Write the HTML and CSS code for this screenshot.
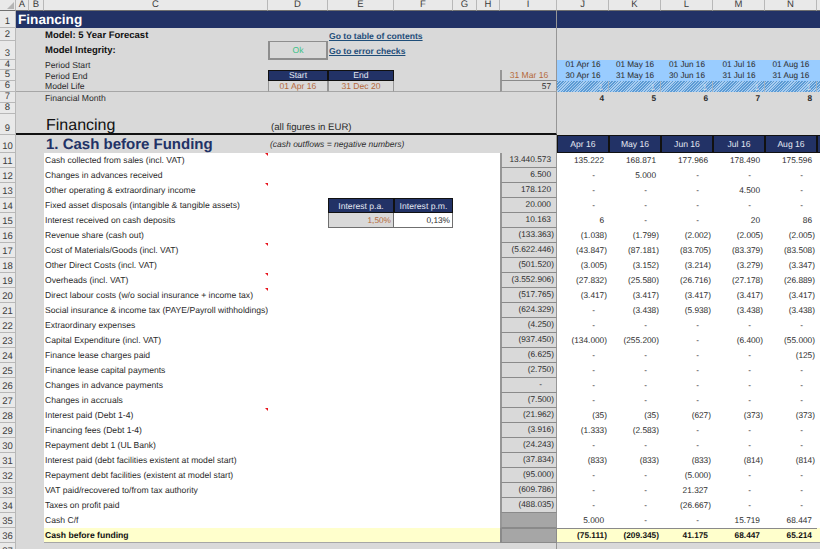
FILE: index.html
```html
<!DOCTYPE html>
<html>

<head>
    <title>Financing</title>
    <meta http-equiv="Content-Type" content="text/html; charset=utf-8">
    <link rel="stylesheet" href="styles.css">
</head>

<body>
    <div id="sheet">
        <table>
            <colgroup>
                <col class="c-head"><col class="c-a"><col class="c-b"><col class="c-c"><col class="c-d"><col class="c-e"><col class="c-f"><col class="c-g"><col class="c-h"><col class="c-i"><col class="c-m"><col class="c-m"><col class="c-m"><col class="c-m"><col class="c-m"><col class="c-m">
            </colgroup>
            <tr class="rh">
                <th class="corner"></th><th>A</th><th>B</th><th>C</th><th>D</th><th>E</th><th>F</th><th>G</th><th>H</th><th>I</th><th>J</th><th>K</th><th>L</th><th>M</th><th>N</th><th></th>
            </tr>
            <tr class="r1">
                <th>1</th><td colspan="9" class="title rb">Financing</td><td colspan="6" class="title"></td>
            </tr>
            <tr class="r2">
                <th>2</th><td colspan="2"></td><td class="b">Model: 5 Year Forecast</td><td></td><td colspan="2" class="link">Go to table of contents</td><td colspan="3" class="rb"></td><td colspan="6"></td>
            </tr>
            <tr class="r3">
                <th>3</th><td colspan="2"></td><td class="b">Model Integrity:</td><td class="ok">Ok</td><td colspan="2" class="link">Go to error checks</td><td colspan="3" class="rb"></td><td colspan="6"></td>
            </tr>
            <tr class="r4 first">
                <th>4</th><td colspan="2"></td><td class="lab">Period Start</td><td colspan="6" class="rb"></td><td class="blue">01 Apr 16</td><td class="blue">01 May 16</td><td class="blue">01 Jun 16</td><td class="blue">01 Jul 16</td><td class="blue">01 Aug 16</td><td class="blue"></td>
            </tr>
            <tr class="r4">
                <th>5</th><td colspan="2"></td><td class="lab">Period End</td><td class="nav">Start</td><td class="nav">End</td><td colspan="3"></td><td class="i ctr inp">31 Mar 16</td><td class="blue">30 Apr 16</td><td class="blue">31 May 16</td><td class="blue">30 Jun 16</td><td class="blue">31 Jul 16</td><td class="blue">31 Aug 16</td><td class="blue"></td>
            </tr>
            <tr class="r4 line">
                <th>6</th><td colspan="2"></td><td class="lab">Model Life</td><td class="ctr inp box">01 Apr 16</td><td class="ctr inp box">31 Dec 20</td><td colspan="3"></td><td class="i n">57</td><td class="hatch">1</td><td class="hatch">1</td><td class="hatch">1</td><td class="hatch">1</td><td class="hatch">1</td><td class="hatch"></td>
            </tr>
            <tr class="r4">
                <th>7</th><td colspan="2"></td><td class="lab">Financial Month</td><td colspan="6" class="rb"></td><td class="n b">4</td><td class="n b">5</td><td class="n b">6</td><td class="n b">7</td><td class="n b">8</td><td></td>
            </tr>
            <tr class="r4">
                <th>8</th><td colspan="9" class="rb"></td><td colspan="6"></td>
            </tr>
            <tr class="r9">
                <th>9</th><td colspan="2"></td><td class="big">Financing</td><td colspan="6" class="rb figs">(all figures in EUR)</td><td colspan="6"></td>
            </tr>
            <tr class="r10">
                <th>10</th><td colspan="2"></td><td class="sect">1. Cash before Funding</td><td colspan="6" class="rb hint">(cash outflows = negative numbers)</td><td class="nav">Apr 16</td><td class="nav">May 16</td><td class="nav">Jun 16</td><td class="nav">Jul 16</td><td class="nav">Aug 16</td><td class="nav"></td>
            </tr>
            <tr>
                <th>11</th><td colspan="2"></td><td class="lab w note">Cash collected from sales (incl. VAT)</td><td colspan="5" class="w"></td><td class="i n">13.440.573</td><td class="w n">135.222</td><td class="w n">168.871</td><td class="w n">177.966</td><td class="w n">178.490</td><td class="w n">175.596</td><td class="w"></td>
            </tr>
            <tr>
                <th>12</th><td colspan="2"></td><td class="lab w">Changes in advances received</td><td colspan="5" class="w"></td><td class="i n">6.500</td><td class="w d">-</td><td class="w n">5.000</td><td class="w d">-</td><td class="w d">-</td><td class="w d">-</td><td class="w"></td>
            </tr>
            <tr>
                <th>13</th><td colspan="2"></td><td class="lab w note">Other operating &amp; extraordinary income</td><td colspan="5" class="w"></td><td class="i n">178.120</td><td class="w d">-</td><td class="w d">-</td><td class="w d">-</td><td class="w n">4.500</td><td class="w d">-</td><td class="w"></td>
            </tr>
            <tr>
                <th>14</th><td colspan="2"></td><td class="lab w">Fixed asset disposals (intangible &amp; tangible assets)</td><td class="w"></td><td class="nav">Interest p.a.</td><td class="nav">Interest p.m.</td><td colspan="2" class="w"></td><td class="i n">20.000</td><td class="w d">-</td><td class="w d">-</td><td class="w d">-</td><td class="w d">-</td><td class="w d">-</td><td class="w"></td>
            </tr>
            <tr>
                <th>15</th><td colspan="2"></td><td class="lab w">Interest received on cash deposits</td><td class="w"></td><td class="n inp rate">1,50%</td><td class="n rate w">0,13%</td><td colspan="2" class="w"></td><td class="i n">10.163</td><td class="w n">6</td><td class="w d">-</td><td class="w d">-</td><td class="w n">20</td><td class="w n">86</td><td class="w"></td>
            </tr>
            <tr>
                <th>16</th><td colspan="2"></td><td class="lab w">Revenue share (cash out)</td><td colspan="5" class="w"></td><td class="i p">(133.363)</td><td class="w p">(1.038)</td><td class="w p">(1.799)</td><td class="w p">(2.002)</td><td class="w p">(2.005)</td><td class="w p">(2.005)</td><td class="w"></td>
            </tr>
            <tr>
                <th>17</th><td colspan="2"></td><td class="lab w note">Cost of Materials/Goods (incl. VAT)</td><td colspan="5" class="w"></td><td class="i p">(5.622.446)</td><td class="w p">(43.847)</td><td class="w p">(87.181)</td><td class="w p">(83.705)</td><td class="w p">(83.379)</td><td class="w p">(83.508)</td><td class="w"></td>
            </tr>
            <tr>
                <th>18</th><td colspan="2"></td><td class="lab w">Other Direct Costs (incl. VAT)</td><td colspan="5" class="w"></td><td class="i p">(501.520)</td><td class="w p">(3.005)</td><td class="w p">(3.152)</td><td class="w p">(3.214)</td><td class="w p">(3.279)</td><td class="w p">(3.347)</td><td class="w"></td>
            </tr>
            <tr>
                <th>19</th><td colspan="2"></td><td class="lab w note">Overheads (incl. VAT)</td><td colspan="5" class="w"></td><td class="i p">(3.552.906)</td><td class="w p">(27.832)</td><td class="w p">(25.580)</td><td class="w p">(26.716)</td><td class="w p">(27.178)</td><td class="w p">(26.889)</td><td class="w"></td>
            </tr>
            <tr>
                <th>20</th><td colspan="2"></td><td class="lab w note">Direct labour costs (w/o social insurance + income tax)</td><td colspan="5" class="w"></td><td class="i p">(517.765)</td><td class="w p">(3.417)</td><td class="w p">(3.417)</td><td class="w p">(3.417)</td><td class="w p">(3.417)</td><td class="w p">(3.417)</td><td class="w"></td>
            </tr>
            <tr>
                <th>21</th><td colspan="2"></td><td class="lab w">Social insurance &amp; income tax (PAYE/Payroll withholdings)</td><td colspan="5" class="w"></td><td class="i p">(624.329)</td><td class="w d">-</td><td class="w p">(3.438)</td><td class="w p">(5.938)</td><td class="w p">(3.438)</td><td class="w p">(3.438)</td><td class="w"></td>
            </tr>
            <tr>
                <th>22</th><td colspan="2"></td><td class="lab w">Extraordinary expenses</td><td colspan="5" class="w"></td><td class="i p">(4.250)</td><td class="w d">-</td><td class="w d">-</td><td class="w d">-</td><td class="w d">-</td><td class="w d">-</td><td class="w"></td>
            </tr>
            <tr>
                <th>23</th><td colspan="2"></td><td class="lab w">Capital Expenditure (incl. VAT)</td><td colspan="5" class="w"></td><td class="i p">(937.450)</td><td class="w p">(134.000)</td><td class="w p">(255.200)</td><td class="w d">-</td><td class="w p">(6.400)</td><td class="w p">(55.000)</td><td class="w"></td>
            </tr>
            <tr>
                <th>24</th><td colspan="2"></td><td class="lab w">Finance lease charges paid</td><td colspan="5" class="w"></td><td class="i p">(6.625)</td><td class="w d">-</td><td class="w d">-</td><td class="w d">-</td><td class="w d">-</td><td class="w p">(125)</td><td class="w"></td>
            </tr>
            <tr>
                <th>25</th><td colspan="2"></td><td class="lab w">Finance lease capital payments</td><td colspan="5" class="w"></td><td class="i p">(2.750)</td><td class="w d">-</td><td class="w d">-</td><td class="w d">-</td><td class="w d">-</td><td class="w d">-</td><td class="w"></td>
            </tr>
            <tr>
                <th>26</th><td colspan="2"></td><td class="lab w">Changes in advance payments</td><td colspan="5" class="w"></td><td class="i d">-</td><td class="w d">-</td><td class="w d">-</td><td class="w d">-</td><td class="w d">-</td><td class="w d">-</td><td class="w"></td>
            </tr>
            <tr>
                <th>27</th><td colspan="2"></td><td class="lab w">Changes in accruals</td><td colspan="5" class="w"></td><td class="i p">(7.500)</td><td class="w d">-</td><td class="w d">-</td><td class="w d">-</td><td class="w d">-</td><td class="w d">-</td><td class="w"></td>
            </tr>
            <tr>
                <th>28</th><td colspan="2"></td><td class="lab w note">Interest paid (Debt 1-4)</td><td colspan="5" class="w"></td><td class="i p">(21.962)</td><td class="w p">(35)</td><td class="w p">(35)</td><td class="w p">(627)</td><td class="w p">(373)</td><td class="w p">(373)</td><td class="w"></td>
            </tr>
            <tr>
                <th>29</th><td colspan="2"></td><td class="lab w">Financing fees (Debt 1-4)</td><td colspan="5" class="w"></td><td class="i p">(3.916)</td><td class="w p">(1.333)</td><td class="w p">(2.583)</td><td class="w d">-</td><td class="w d">-</td><td class="w d">-</td><td class="w"></td>
            </tr>
            <tr>
                <th>30</th><td colspan="2"></td><td class="lab w">Repayment debt 1 (UL Bank)</td><td colspan="5" class="w"></td><td class="i p">(24.243)</td><td class="w d">-</td><td class="w d">-</td><td class="w d">-</td><td class="w d">-</td><td class="w d">-</td><td class="w"></td>
            </tr>
            <tr>
                <th>31</th><td colspan="2"></td><td class="lab w">Interest paid (debt facilities existent at model start)</td><td colspan="5" class="w"></td><td class="i p">(37.834)</td><td class="w p">(833)</td><td class="w p">(833)</td><td class="w p">(833)</td><td class="w p">(814)</td><td class="w p">(814)</td><td class="w"></td>
            </tr>
            <tr>
                <th>32</th><td colspan="2"></td><td class="lab w">Repayment debt facilities (existent at model start)</td><td colspan="5" class="w"></td><td class="i p">(95.000)</td><td class="w d">-</td><td class="w d">-</td><td class="w p">(5.000)</td><td class="w d">-</td><td class="w d">-</td><td class="w"></td>
            </tr>
            <tr>
                <th>33</th><td colspan="2"></td><td class="lab w">VAT paid/recovered to/from tax authority</td><td colspan="5" class="w"></td><td class="i p">(609.786)</td><td class="w d">-</td><td class="w d">-</td><td class="w n">21.327</td><td class="w d">-</td><td class="w d">-</td><td class="w"></td>
            </tr>
            <tr>
                <th>34</th><td colspan="2"></td><td class="lab w">Taxes on profit paid</td><td colspan="5" class="w"></td><td class="i p">(488.035)</td><td class="w d">-</td><td class="w d">-</td><td class="w p">(26.667)</td><td class="w d">-</td><td class="w d">-</td><td class="w"></td>
            </tr>
            <tr>
                <th>35</th><td colspan="2"></td><td class="lab w">Cash C/f</td><td colspan="5" class="w"></td><td class="i dark"></td><td class="w n">5.000</td><td class="w d">-</td><td class="w d">-</td><td class="w n">15.719</td><td class="w n">68.447</td><td class="w"></td>
            </tr>
            <tr class="total">
                <th>36</th><td colspan="2"></td><td class="lab">Cash before funding</td><td colspan="5"></td><td class="i dark"></td><td class="p">(75.111)</td><td class="p">(209.345)</td><td class="n">41.175</td><td class="n">68.447</td><td class="n">65.214</td><td></td>
            </tr>
            <tr>
                <th>37</th><td colspan="9" class="rb"></td><td colspan="6"></td>
            </tr>
        </table>
    </div>
</body>

</html>
```

FILE: styles.css
```css
html,
body {
    margin: 0;
    overflow: hidden;
    background-color: #d9d9d9;
}

#sheet {
    width: 820px;
    height: 549px;
    overflow: hidden;
}

table {
    border-collapse: separate;
    border-spacing: 0;
    table-layout: fixed;
    width: 869px;
    font-family: 'Liberation Sans', Arial, sans-serif;
    font-size: 8.6px;
    color: #2b2b2b;
    text-rendering: geometricPrecision;
}

.c-head { width: 16px; }
.c-a { width: 13px; }
.c-b { width: 15px; }
.c-c { width: 224px; }
.c-d { width: 60px; }
.c-e { width: 66px; }
.c-f { width: 59px; }
.c-g { width: 24px; }
.c-h { width: 23px; }
.c-i { width: 57px; }
.c-m { width: 52px; }

tr {
    height: 15px;
}

td,
th {
    box-sizing: border-box;
    padding: 0;
    line-height: 10px;
    white-space: nowrap;
    overflow: hidden;
    font-weight: normal;
}

/* data rows sit a pixel above the middle of the row */
tr:not([class]) td:not(.nav):not(.rate),
.total td {
    padding-bottom: 2px;
}

/* row and column headers */
th {
    background-color: #e9e9e9;
    border-right: 1px solid #b8b8b8;
    border-bottom: 1px solid #b8b8b8;
    color: #3c3c3c;
    text-align: center;
    vertical-align: bottom;
    font-size: 9.5px;
}

.rh { height: 11px; }
.rh th {
    line-height: 10px;
    border-bottom: 1px solid #6f6f6f;
    vertical-align: middle;
}

.corner {
    position: relative;
}

.corner::after {
    content: '';
    position: absolute;
    right: 1px;
    bottom: 1px;
    border-left: 7px solid transparent;
    border-bottom: 7px solid #b4b4b4;
}

.r1 { height: 17px; }
.r2 { height: 13px; }
.r3 { height: 19px; }
.r4 { height: 11px; }
.first { height: 10px; }
.first th { line-height: 9px; }
.r9 { height: 21px; }
.r10 { height: 18px; }

.r2 td { vertical-align: bottom; }

.title {
    background-color: #223266;
    color: white;
    font-weight: bold;
    font-size: 13.6px;
    padding-left: 2px;
}

.rb { border-right: 1px solid #969696; }

.b { font-weight: bold; }

.r2 .b,
.r3 .b {
    padding-left: 1px;
    font-size: 9.5px;
    color: #111;
}

.lab { padding-left: 1px; }

.link {
    padding-left: 1px;
    color: #1f4e79;
    font-weight: bold;
    font-size: 8.6px;
    text-decoration: underline;
}

.ok {
    border: 2px solid #8e8e8e;
    border-top-width: 1px;
    text-align: center;
    color: #3fc288;
}

.blue {
    background-color: #99ccff;
    text-align: center;
    font-size: 8.2px;
}

.nav {
    background-color: #223266;
    border: 1px solid #111;
    color: #e4e8f2;
    text-align: center;
}

.r4 .nav { line-height: 9px; }

.hatch {
    background-image: repeating-linear-gradient(135deg, #5b9bd5 0, #5b9bd5 1px, #a9cdf0 1px, #a9cdf0 2px);
    border-right: 1px solid #a3b3c2;
    color: #c9dcec;
    text-align: right;
    padding-right: 5px;
}

.ctr { text-align: center; }

.inp { color: #b5693a; }

.box {
    border-left: 1px solid #969696;
    border-right: 1px solid #969696;
}

.line td:not(.hatch) {
    border-bottom: 1px solid #a6a6a6;
}

.big {
    padding-left: 2px;
    font-size: 16px;
    line-height: 14px;
    color: #111;
    vertical-align: bottom;
}

.figs {
    padding-left: 3px;
    font-size: 9.6px;
    vertical-align: bottom;
}

.r9 td:not(:first-child) {
    border-bottom: 2px solid #111;
}

.r9 td:last-child {
    border-bottom: none;
}

.sect {
    padding-left: 2px;
    font-size: 15px;
    line-height: 17px;
    font-weight: bold;
    color: #223266;
}

.hint {
    padding-left: 2px;
    font-size: 8.5px;
    font-style: italic;
}

/* data rows */
.w { background-color: white; }

.n,
.p,
.d {
    text-align: right;
    font-size: 8.3px;
}
.n { padding-right: 5px; }
.p { padding-right: 2px; }
.d { padding-right: 14px; }

.i {
    background-color: #d9d9d9;
    border-left: 2px solid #969696;
    border-right: 1px solid #969696;
    border-bottom: 1px solid #8a8a8a;
}

.dark { background-color: #a6a6a6; }

.note {
    position: relative;
}

.note::after {
    content: '';
    position: absolute;
    top: 0;
    right: 0;
    border-top: 3px solid #e8141c;
    border-left: 3px solid transparent;
}

.rate {
    border-bottom: 1px solid #6f6f6f;
    border-right: 1px solid #6f6f6f;
    padding-right: 2px;
}

.rate.inp {
    border-left: 1px solid #6f6f6f;
}

.total td {
    background-color: #ffffcc;
    font-weight: bold;
    color: #111;
    border-top: 1px solid #ffffcc;
    border-bottom: 1px solid #a6a6a6;
}

.total td:first-of-type {
    background-color: #d9d9d9;
    border-color: #d9d9d9;
}

.total .i { background-color: #a6a6a6; border-color: #8a8a8a; }
.total .p,
.total .n { border-top-color: #8a8a8a; }
```
